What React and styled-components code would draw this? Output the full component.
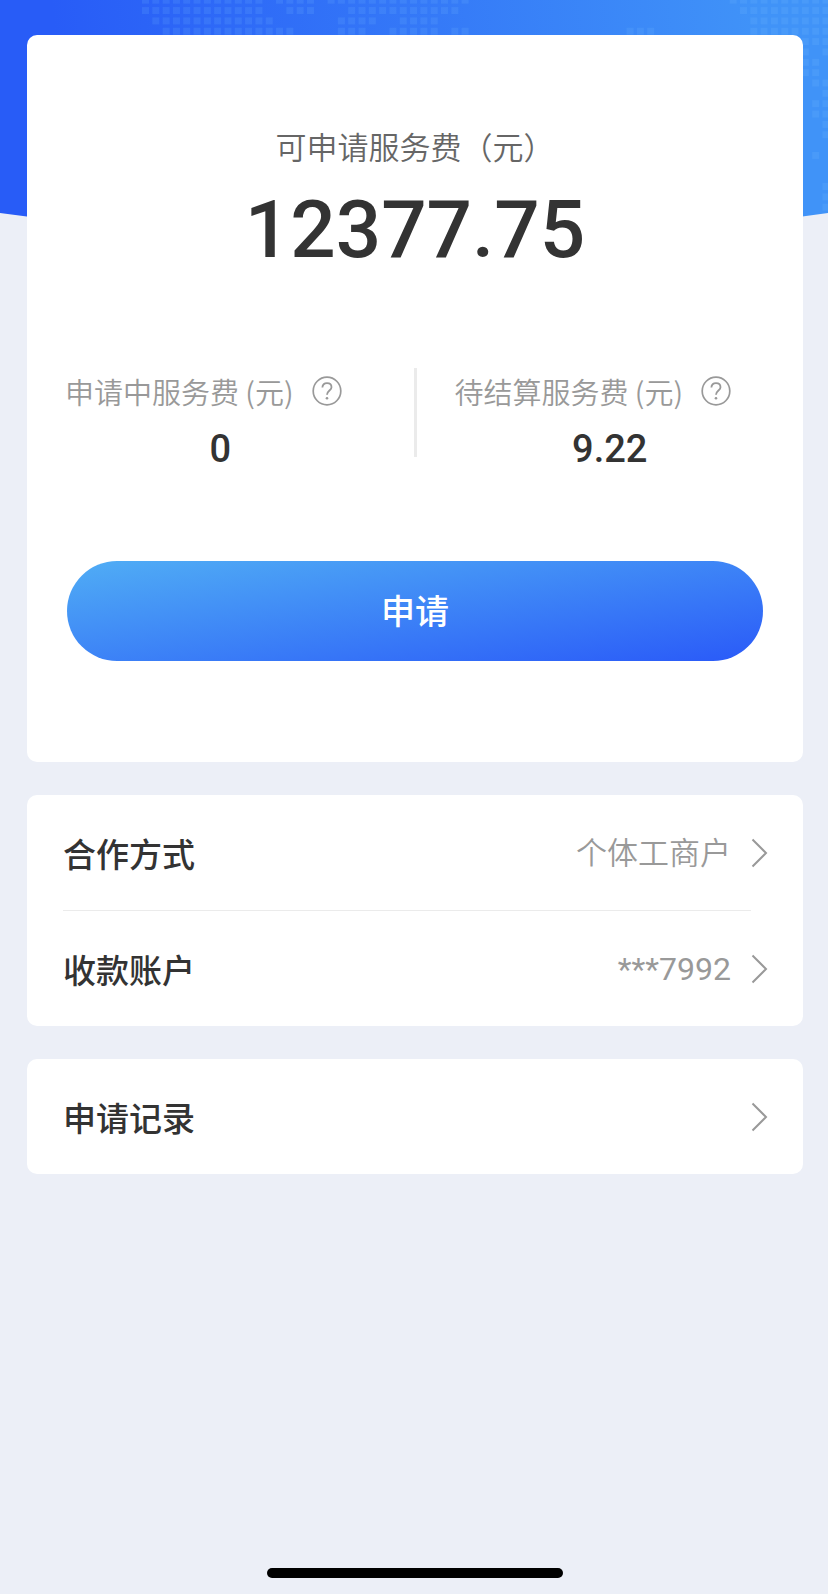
import React from "react";
import styled, { createGlobalStyle } from "styled-components";

const colors = {
  page: "#eceff7",
  card: "#ffffff",
  text: "#333333",
  label: "#666666",
  muted: "#999999",
  divider: "#ebebeb"
};

const textFont = `"Noto Sans CJK SC", sans-serif`;
const numberFont = `Roboto, "Noto Sans CJK SC", sans-serif`;

const GlobalStyle = createGlobalStyle`
  *, *::before, *::after {
    box-sizing: border-box;
  }

  body {
    margin: 0;
    background: ${colors.page};
    color: ${colors.text};
    font-family: ${textFont};
  }

  button {
    margin: 0;
    padding: 0;
    border: 0;
    background: none;
    color: inherit;
    font: inherit;
    cursor: pointer;
  }
`;

const Page = styled.div`
  display: grid;
  grid-template-columns: minmax(0, 1fr);
  min-height: 100vh;
`;

const Backdrop = styled.svg`
  grid-area: 1 / 1;
  width: 100%;
  height: 229px;
`;

const Content = styled.div`
  grid-area: 1 / 1;
  z-index: 1;
  display: flex;
  flex-direction: column;
  padding: 35px 25px 16px 27px;
`;

const Main = styled.main`
  flex: 1;
  display: flex;
  flex-direction: column;
  gap: 33px;
`;

const Card = styled.section`
  background: ${colors.card};
  border-radius: 10px;
`;

const FeeCard = styled(Card)`
  padding: 89px 40px 101px;
`;

const Total = styled.div`
  display: flex;
  flex-direction: column;
  align-items: center;
`;

const TotalLabel = styled.div`
  color: ${colors.label};
  font-size: 31px;
  font-weight: 350;
  line-height: 44px;
`;

const TotalValue = styled.div`
  font-family: ${numberFont};
  font-size: 80px;
  font-weight: 500;
  line-height: 124px;
`;

const Summary = styled.div`
  display: flex;
  align-items: flex-start;
  margin: 76px -40px 0;
`;

const SummaryItem = styled.div`
  flex: 1;
  display: flex;
  flex-direction: column;
  align-items: center;
`;

const SummaryDivider = styled.div`
  width: 3px;
  height: 89px;
  background: ${colors.divider};
`;

const SummaryLabel = styled.div`
  display: flex;
  align-items: center;
  gap: 18px;
  padding-right: 34px;
  color: ${colors.muted};
  font-size: 29px;
  font-weight: 350;
  line-height: 46px;
  white-space: nowrap;
`;

const HelpButton = styled.button`
  display: flex;
`;

const SummaryValue = styled.div`
  font-family: ${numberFont};
  font-size: 38px;
  font-weight: 500;
  line-height: 70px;
`;

const ApplyButton = styled.button`
  display: block;
  width: 100%;
  height: 100px;
  margin-top: 77px;
  padding-bottom: 3px;
  border-radius: 50px;
  background: linear-gradient(to bottom right, #50adf5, #2a5af8);
  color: #ffffff;
  font-size: 34px;
  font-weight: 500;
`;

const Row = styled.button`
  display: flex;
  align-items: center;
  width: 100%;
  height: 115px;
  padding: 0 35px 0 36px;
  text-align: left;
`;

const RowTitle = styled.span`
  flex: 1;
  font-size: 33px;
  font-weight: 500;
`;

const RowValue = styled.span`
  margin-right: 20px;
  padding-bottom: ${({ $numeric }) => ($numeric ? 0 : "4px")};
  color: ${colors.muted};
  font-family: ${({ $numeric }) => ($numeric ? numberFont : textFont)};
  font-size: ${({ $numeric }) => ($numeric ? "32px" : "31px")};
  font-weight: ${({ $numeric }) => ($numeric ? 400 : 350)};
`;

const RowDivider = styled.hr`
  height: 1px;
  margin: 0 52px 0 36px;
  border: 0;
  background: ${colors.divider};
`;

const HomeIndicator = styled.div`
  align-self: center;
  width: 296px;
  height: 10px;
  border-radius: 5px;
  background: #000000;
`;

// Dotted world map: [row, first column, last column]
const dotRuns = [
  [0, 0, 11],
  [0, 13, 16],
  [0, 18, 31],
  [0, 57, 66],
  [1, 0, 11],
  [1, 14, 16],
  [1, 20, 30],
  [1, 58, 66],
  [2, 1, 12],
  [2, 19, 22],
  [2, 25, 28],
  [2, 59, 66],
  [3, 2, 14],
  [3, 19, 21],
  [3, 24, 28],
  [3, 30, 31],
  [3, 47, 49],
  [3, 59, 66],
  [4, 64, 66],
  [5, 64, 64],
  [5, 66, 66],
  [6, 64, 65],
  [7, 64, 65],
  [8, 65, 66],
  [9, 66, 66],
  [10, 65, 66],
  [11, 65, 66],
  [12, 66, 66],
  [13, 66, 66],
  [15, 65, 65],
  [18, 66, 66],
  [19, 66, 66],
  [20, 66, 66]
];

const dots = dotRuns.flatMap(([row, first, last]) =>
  Array.from({ length: last - first + 1 }, (_, i) => ({
    x: 142 + (first + i) * 10.31,
    y: -3.3 + row * 10.35
  }))
);

const MapBackdrop = () => (
  <Backdrop viewBox="0 0 828 229" preserveAspectRatio="none" aria-hidden="true">
    <defs>
      <linearGradient
        id="sky"
        gradientUnits="userSpaceOnUse"
        x1="60"
        y1="80"
        x2="760"
        y2="0"
      >
        <stop offset="0" stopColor="#285cf7" />
        <stop offset="1" stopColor="#4093f8" />
      </linearGradient>
      <clipPath id="curve">
        <path d="M0 0H828V213Q414 272 0 213Z" />
      </clipPath>
    </defs>
    <g clipPath="url(#curve)">
      <rect width="828" height="250" fill="url(#sky)" />
      {dots.map(({ x, y }) => (
        <rect
          key={`${x}-${y}`}
          x={x}
          y={y}
          width="7"
          height="7"
          fill="#7fc4ff"
          fillOpacity="0.14"
        />
      ))}
    </g>
  </Backdrop>
);

const HelpIcon = () => (
  <svg width="30" height="30" viewBox="0 0 30 30" fill="none" aria-hidden="true">
    <circle cx="15" cy="15" r="13.8" stroke="#999" strokeWidth="1.7" />
    <path
      d="M10.4 11.6C10.4 8.7 12.3 7.1 15 7.1S19.5 8.7 19.5 11.2C19.5 14.4 15 14.8 15 18.8"
      stroke="#999"
      strokeWidth="1.8"
    />
    <circle cx="15" cy="22.2" r="1.3" fill="#999" />
  </svg>
);

const Chevron = () => (
  <svg width="17" height="30" viewBox="0 0 17 30" fill="none" aria-hidden="true">
    <path d="M1.5 1.5L15 15L1.5 28.5" stroke="#999" strokeWidth="2" />
  </svg>
);

const SummaryField = ({ label, value }) => (
  <SummaryItem>
    <SummaryLabel>
      {label}
      <HelpButton type="button" aria-label={label}>
        <HelpIcon />
      </HelpButton>
    </SummaryLabel>
    <SummaryValue>{value}</SummaryValue>
  </SummaryItem>
);

const LinkRow = ({ title, value, numeric }) => (
  <Row type="button">
    <RowTitle>{title}</RowTitle>
    {value && <RowValue $numeric={numeric}>{value}</RowValue>}
    <Chevron />
  </Row>
);

const App = () => (
  <>
    <GlobalStyle />
    <Page>
      <MapBackdrop />
      <Content>
        <Main>
          <FeeCard>
            <Total>
              <TotalLabel>可申请服务费（元）</TotalLabel>
              <TotalValue>12377.75</TotalValue>
            </Total>
            <Summary>
              <SummaryField label="申请中服务费 (元)" value="0" />
              <SummaryDivider />
              <SummaryField label="待结算服务费 (元)" value="9.22" />
            </Summary>
            <ApplyButton type="button">申请</ApplyButton>
          </FeeCard>
          <Card>
            <LinkRow title="合作方式" value="个体工商户" />
            <RowDivider />
            <LinkRow title="收款账户" value="***7992" numeric />
          </Card>
          <Card>
            <LinkRow title="申请记录" />
          </Card>
        </Main>
        <HomeIndicator />
      </Content>
    </Page>
  </>
);

export default App;
